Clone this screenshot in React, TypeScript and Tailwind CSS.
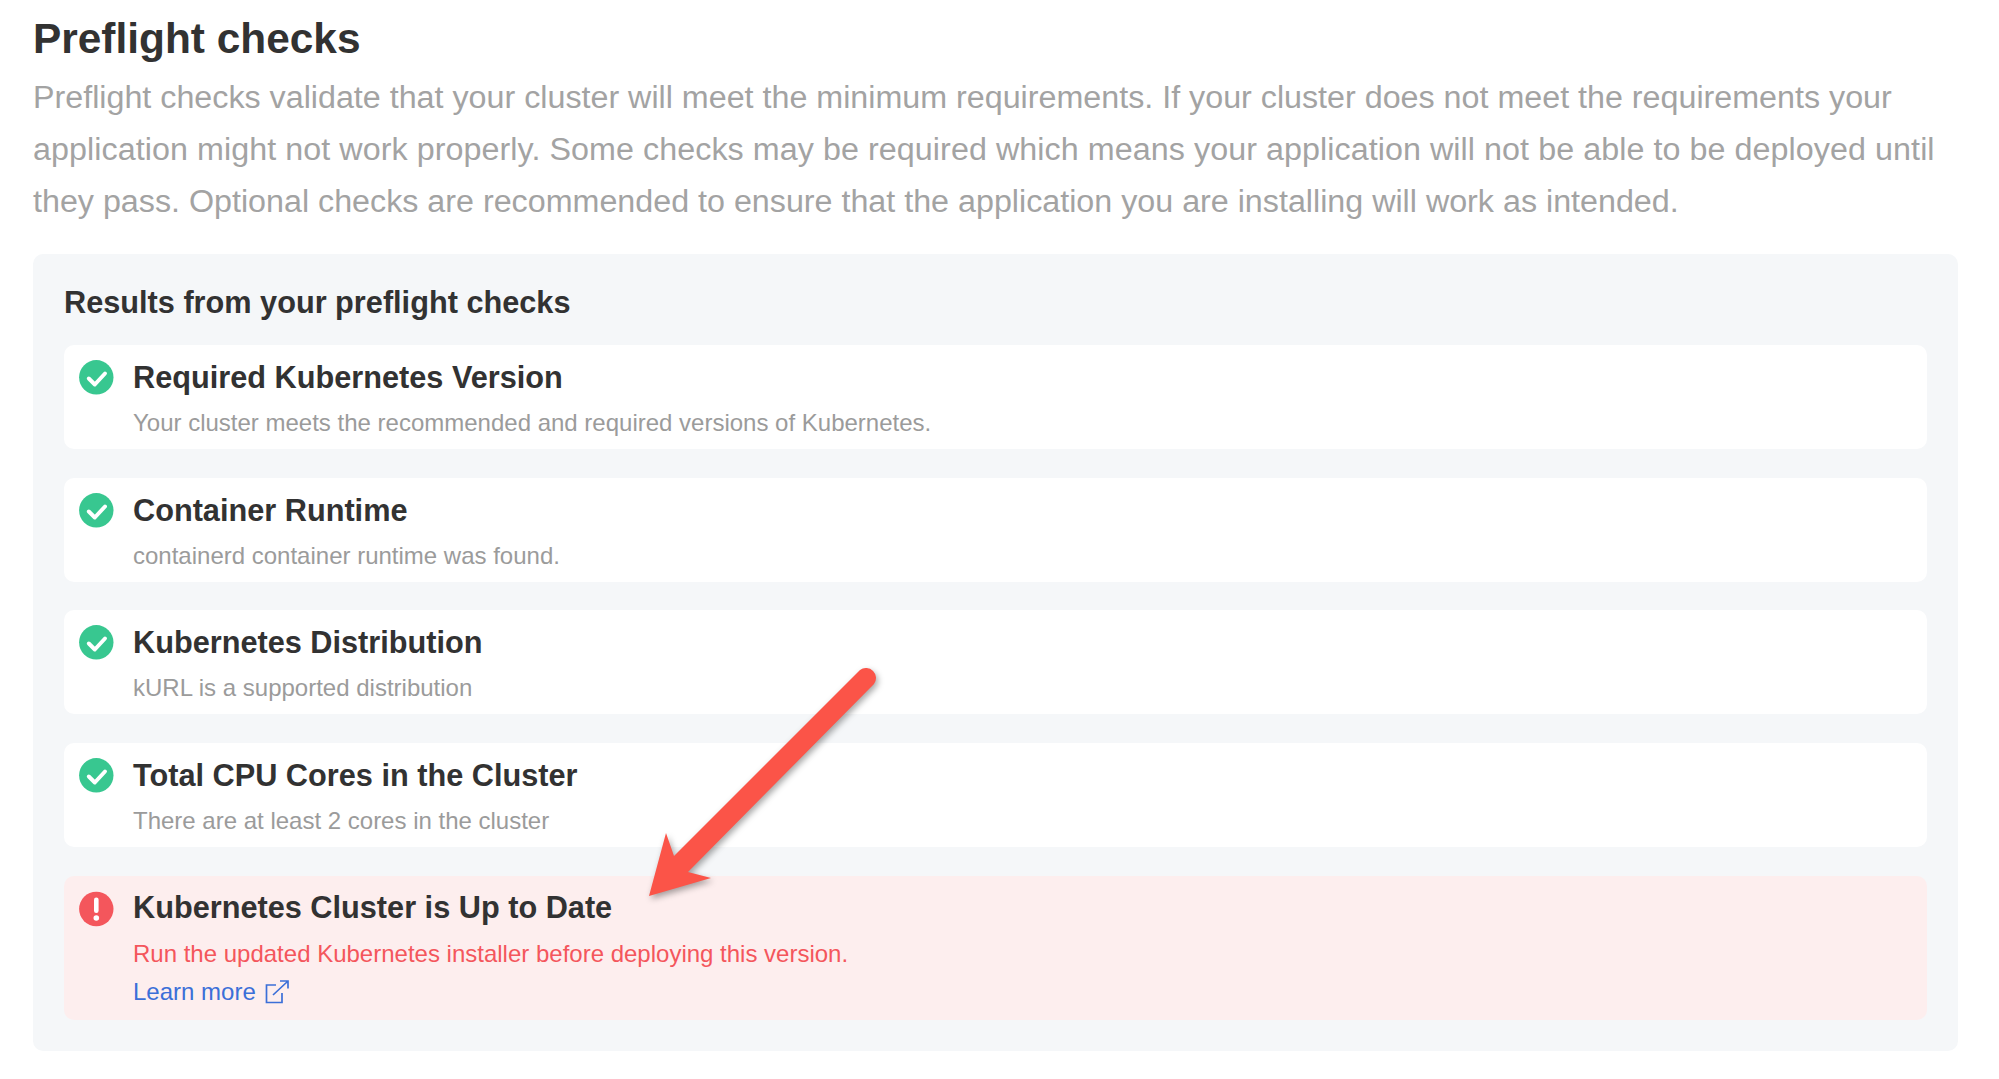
import React from "react";

const font = { fontFamily: '"Liberation Sans", Arial, sans-serif' };

function Check() {
  return (
    <svg width="36" height="36" viewBox="0 0 36 36" className="-mt-px shrink-0">
      <circle cx="17.3" cy="18.3" r="17.2" fill="#38c790" />
      <path d="M9.8 19.5L15.8 25.5L26 14.5" fill="none" stroke="#fff" strokeWidth="3.9" strokeLinecap="round" strokeLinejoin="round" />
    </svg>
  );
}

function Alert() {
  return (
    <svg width="36" height="36" viewBox="0 0 36 36" className="mt-px shrink-0">
      <circle cx="17.3" cy="18" r="17.2" fill="#f4565c" />
      <rect x="15" y="6.5" width="4.6" height="15.5" rx="2.2" fill="#fff" />
      <circle cx="17.3" cy="27" r="2.8" fill="#fff" />
    </svg>
  );
}

function Row({ title, text }: { title: string; text: string }) {
  return (
    <div className="flex h-[104px] gap-[18px] rounded-[10px] bg-white pl-[15px] pt-[15px]">
      <Check />
      <div>
        <div className="text-[30.7px] font-semibold leading-[36px] text-[#323232]">{title}</div>
        <div className="mt-[12px] text-[24px] leading-[30px] text-[#9b9b9b]">{text}</div>
      </div>
    </div>
  );
}

export default function App() {
  return (
    <div style={font} className="relative h-[1079px] w-[1999px] overflow-hidden bg-white pl-[33px] pr-[41px] pt-[15px]">
      <h1 className="text-[42.4px] font-bold leading-[48px] text-[#323232]">Preflight checks</h1>
      <p className="mt-[8px] whitespace-nowrap text-[32.25px] leading-[52px] text-[#a3a3a3]">
        Preflight checks validate that your cluster will meet the minimum requirements. If your cluster does not meet the requirements your
        <br />
        <span className="tracking-[0.07px]">application might not work properly. Some checks may be required which means your application will not be able to be deployed until</span>
        <br />
        they pass. Optional checks are recommended to ensure that the application you are installing will work as intended.
      </p>
      <section className="mt-[27px] h-[797px] rounded-[10px] bg-[#f5f7f9] px-[31px] pt-[31px]">
        <h2 className="text-[30.7px] font-bold leading-[36px] text-[#323232]">Results from your preflight checks</h2>
        <div className="mt-[24px] flex flex-col gap-[28.7px]">
          <Row title="Required Kubernetes Version" text="Your cluster meets the recommended and required versions of Kubernetes." />
          <Row title="Container Runtime" text="containerd container runtime was found." />
          <Row title="Kubernetes Distribution" text="kURL is a supported distribution" />
          <Row title="Total CPU Cores in the Cluster" text="There are at least 2 cores in the cluster" />
          <div className="flex h-[144px] gap-[18px] rounded-[10px] bg-[#fdeeee] pl-[15px] pt-[14px]">
            <Alert />
            <div>
              <div className="text-[30.7px] font-semibold leading-[36px] text-[#323232]">Kubernetes Cluster is Up to Date</div>
              <div className="mt-[13px] text-[24px] leading-[30px] text-[#f4565c]">Run the updated Kubernetes installer before deploying this version.</div>
              <div className="mt-[8px] flex items-center gap-[9px] text-[24px] leading-[30px] text-[#3b6fd8]">
                Learn more
                <svg width="24" height="24" viewBox="0 0 24 24" fill="none" stroke="#3b6fd8" strokeWidth="1.7">
                  <path d="M11 5H1.5v17.5h15.5V13" />
                  <path d="M8 15L22.5 1.5M15 1h8v7.5" />
                </svg>
              </div>
            </div>
          </div>
        </div>
      </section>
      <svg
        width="260"
        height="260"
        viewBox="0 0 260 260"
        className="absolute left-[630px] top-[655px] drop-shadow-[2px_3px_3px_rgba(0,0,0,0.35)]"
      >
        <path d="M230 15L44 201L36 178L19 241L81 223L58 217L244 29A10 10 0 0 0 230 15Z" fill="#fb5448" />
      </svg>
    </div>
  );
}
